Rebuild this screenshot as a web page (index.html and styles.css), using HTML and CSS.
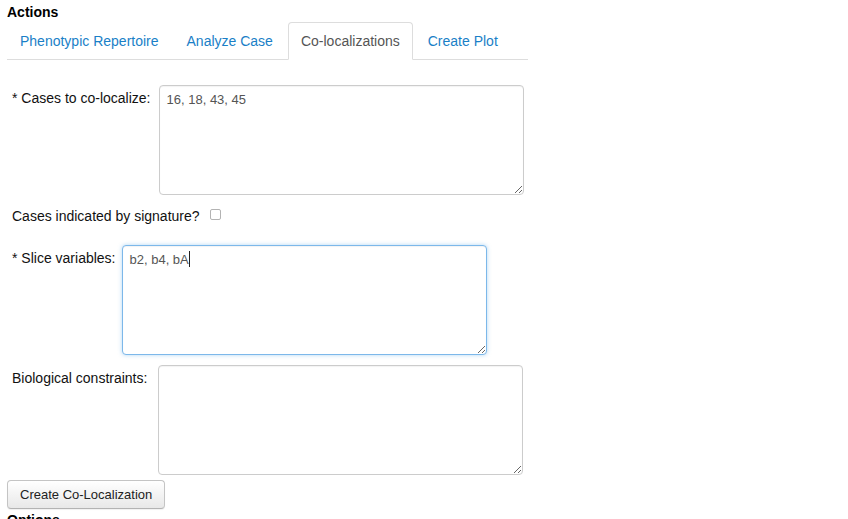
FILE: index.html
```html
<!DOCTYPE html>
<html>
<head>
<meta charset="utf-8">
<link rel="stylesheet" href="styles.css">
</head>
<body>
<div class="page">
  <h4 class="section-title">Actions</h4>
  <ul class="tabs">
    <li class="tab"><a href="#">Phenotypic Repertoire</a></li>
    <li class="tab"><a href="#">Analyze Case</a></li>
    <li class="tab active"><a href="#">Co-localizations</a></li>
    <li class="tab"><a href="#">Create Plot</a></li>
  </ul>
  <form class="form">
    <div class="row row-cases">
      <label class="label">* Cases to co-localize:</label>
      <textarea class="field">16, 18, 43, 45</textarea>
    </div>
    <div class="row row-check">
      <label class="label">Cases indicated by signature?</label>
      <span class="checkbox"></span>
    </div>
    <div class="row row-slice">
      <label class="label">* Slice variables:</label>
      <div class="field field-focus" role="textbox">b2, b4, bA<span class="caret"></span></div>
    </div>
    <div class="row row-bio">
      <label class="label">Biological constraints:</label>
      <textarea class="field"></textarea>
    </div>
    <button type="button" class="btn">Create Co-Localization</button>
  </form>
  <h4 class="section-title options">Options</h4>
</div>
</body>
</html>
```
FILE: styles.css
```css
* { box-sizing: border-box; }
html, body { margin: 0; padding: 0; background: #fff; }
body {
  font-family: "Liberation Sans", Arial, Helvetica, sans-serif;
  font-size: 14px;
  color: #222;
  overflow: hidden;
}
.page { padding: 0 7px; }
.section-title {
  margin: 0;
  padding-top: 4px;
  font-size: 14px;
  line-height: 17px;
  font-weight: bold;
  color: #000;
}
.tabs {
  list-style: none;
  margin: 1px 0 0 0;
  padding: 0;
  width: 521px;
  display: flex;
  border-bottom: 1px solid #ddd;
}
.tab { margin-right: 2px; margin-bottom: -1px; }
.tab a {
  display: block;
  padding: 10px 12px 9px;
  line-height: 17px;
  font-size: 14px;
  color: #1a7fc7;
  text-decoration: none;
  border: 1px solid transparent;
  border-radius: 4px 4px 0 0;
}
.tab.active a {
  color: #555;
  background: #fff;
  border-color: #ddd #ddd transparent;
}
.form { margin-top: 25px; }
.row { display: flex; align-items: flex-start; }
.label {
  padding-left: 5px;
  padding-top: 5px;
  line-height: 17px;
  font-size: 14px;
  color: #111;
}
.field {
  display: block;
  margin: 0 0 0 9px;
  width: 365px;
  height: 110px;
  padding: 5px 7px;
  font-family: "Liberation Sans", Arial, Helvetica, sans-serif;
  font-size: 13px;
  line-height: 18px;
  color: #555;
  background: #fff;
  border: 1px solid #ccc;
  border-radius: 4px;
  box-shadow: inset 0 1px 1px rgba(0,0,0,0.05);
  resize: both;
  overflow: auto;
  outline: none;
}
.row-cases .field { margin-left: 8px; }
.row-slice .field { margin-left: 6px; }
.row-bio .field { margin-left: 11px; }
.field-focus {
  border-color: #7cb8ea;
  box-shadow: inset 0 1px 1px rgba(0,0,0,0.05), 0 0 4px rgba(102,175,233,0.5);
}
.caret {
  display: inline-block;
  width: 1px;
  height: 16px;
  background: #222;
  vertical-align: -3px;
}
.row-check { margin-top: 13px; align-items: center; }
.row-check .label { padding-top: 0; line-height: 16px; }
.checkbox {
  display: inline-block;
  width: 11px;
  height: 11px;
  margin-left: 10px;
  margin-top: -4px;
  border: 1px solid #b3b3b3;
  border-radius: 2px;
  background: #fff;
}
.row-slice { margin-top: 21px; }
.row-bio { margin-top: 10px; }
.btn {
  display: block;
  margin-top: 5px;
  height: 29px;
  padding: 0 12px;
  font-family: "Liberation Sans", Arial, Helvetica, sans-serif;
  font-size: 13px;
  color: #222;
  background: linear-gradient(#fff, #e8e8e8);
  border: 1px solid #c4c4c4;
  border-bottom-color: #b3b3b3;
  border-radius: 4px;
  box-shadow: inset 0 1px 0 rgba(255,255,255,.3), 0 1px 1px rgba(0,0,0,.06);
}
.options { padding-top: 3px; }
```
